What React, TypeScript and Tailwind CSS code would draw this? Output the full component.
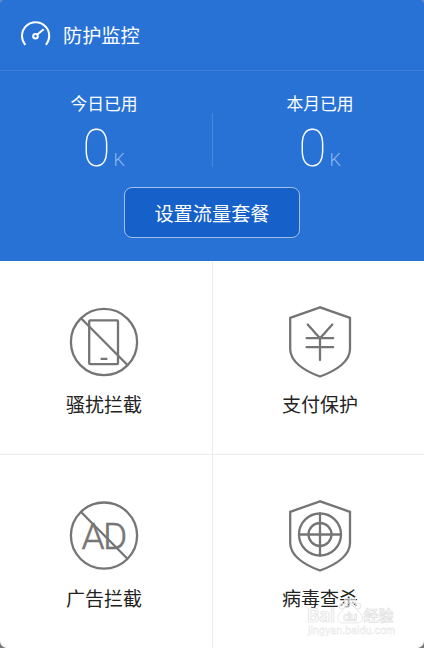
import type { ReactNode } from "react";

interface UsageProps {
  label: string;
  value: string;
  unit: string;
  className?: string;
}

interface TileProps {
  label: string;
  icon: ReactNode;
  className?: string;
}

function GaugeIcon() {
  return (
    <svg width="30" height="28" viewBox="0 0 30 28" fill="none" stroke="white" strokeWidth="2">
      <path d="M4.300 23.800A13.600 13.600 0 1 1 24.900 23.800" />
      <circle cx="14.500" cy="15.200" r="2.300" />
      <path d="M16.300 13.600L22.700 8.200" />
    </svg>
  );
}

function BlockedPhoneIcon() {
  return (
    <svg width="70" height="72" viewBox="0 0 70 72" fill="none" stroke="#757575" strokeWidth="2.3">
      <circle cx="35" cy="36" r="33.1" />
      <rect x="20.2" y="14.4" width="28.8" height="43.8" rx="1" />
      <path d="M12 12.2L58.2 58.800M31.600 52.800h6.800" />
    </svg>
  );
}

function BlockedAdIcon() {
  return (
    <svg width="70" height="72" viewBox="0 0 70 72" fill="none" stroke="#757575" strokeWidth="2.3">
      <circle cx="35" cy="35.6" r="33.1" />
      <path d="M12 12L58.200 58.500" />
      <text
        y="49"
        fill="#757575"
        strokeWidth="0.5"
        fontFamily="Roboto, sans-serif"
        fontWeight="300"
        fontSize="37"
      >
        <tspan x="12.5">A</tspan>
        <tspan x="34">D</tspan>
      </text>
    </svg>
  );
}

function Shield({ children }: { children: ReactNode }) {
  return (
    <svg width="70" height="72" viewBox="0 0 70 72" fill="none" stroke="#757575" strokeWidth="2.3" strokeLinecap="round">
      <path d="M35 1.300L5.200 11.800V43C5.200 55 18 64.500 35 70.500C52 64.500 65 55 65 43V11.800Z" />
      {children}
    </svg>
  );
}

function Usage({ label, value, unit, className = "" }: UsageProps) {
  return (
    <div className={`flex flex-col ${className}`}>
      <span className="text-[16.8px] leading-6">{label}</span>
      <div className="mt-1.5 flex h-12 items-baseline gap-[3px] pl-3">
        <span className="font-['Roboto'] text-[51px] leading-[55px] font-thin">{value}</span>
        <span className="font-['Roboto'] text-[18px] font-light text-[#93b9eb]">{unit}</span>
      </div>
    </div>
  );
}

function Tile({ label, icon, className = "" }: TileProps) {
  return (
    <div className={`flex flex-col items-center border-[#ebebeb] ${className}`}>
      {icon}
      <span className="mt-3 text-[19px] leading-7 text-[#222222]">{label}</span>
    </div>
  );
}

function Watermark() {
  return (
    <svg
      className="absolute top-[592px] left-[303px]"
      width="96"
      height="46"
      fill="white"
      fillOpacity="0.6"
      stroke="#dedede"
      strokeWidth="0.7"
      fontFamily="Inter, 'Noto Sans CJK SC', sans-serif"
      fontWeight="600"
    >
      <circle cx="39" cy="14" r="3" />
      <circle cx="44" cy="9" r="3" />
      <circle cx="50" cy="9" r="3" />
      <circle cx="55" cy="14" r="3" />
      <path d="M47 13C42 13 41 18 37 21C33 25 35 31 40 31H54C60 31 61 25 57 21C53 18 52 13 47 13Z" />
      <text x="4" y="30" fontSize="19" textLength="28" lengthAdjust="spacingAndGlyphs">Bai</text>
      <text x="40" y="29" fontSize="12" textLength="14">du</text>
      <text x="60.500" y="29" fontSize="15" textLength="30" fontWeight="500">经验</text>
      <text x="5" y="41.500" fontSize="10" strokeWidth="0.4" stroke="#e4e4e4" fontWeight="400" textLength="87" lengthAdjust="spacingAndGlyphs">jingyan.baidu.com</text>
    </svg>
  );
}

export default function App() {
  return (
    <div className="h-[648px] w-[424px] bg-[#777777] font-['Noto_Sans_CJK_SC',sans-serif]">
      <div className="relative flex h-full flex-col overflow-hidden rounded-t-[3px] rounded-b-[7px] bg-white">
        <section className="flex h-[261px] flex-col bg-[#2872d6] text-white">
          <header className="flex h-[71px] items-center gap-3 border-b border-[#3a7ddb] pl-[21px]">
            <GaugeIcon />
            <h1 className="text-[19.2px] leading-7">防护监控</h1>
          </header>
          <div className="flex h-[116px] pt-5">
            <Usage label="今日已用" value="0" unit="K" className="w-[212px] pl-[70.5px]" />
            <div className="mt-[22px] h-[54px] w-px bg-[#4a87dc]" />
            <Usage label="本月已用" value="0" unit="K" className="pl-[73.5px]" />
          </div>
          <button className="h-[51px] w-[176px] self-center rounded-lg border border-[#a1c0ec] bg-[#1560c9] pt-0.5 text-[19.2px]">
            设置流量套餐
          </button>
        </section>
        <main className="grid flex-1 grid-cols-[213px_211px] grid-rows-[194px_193px]">
          <Tile label="骚扰拦截" icon={<BlockedPhoneIcon />} className="border-r border-b pt-[45px] pr-1" />
          <Tile
            label="支付保护"
            icon={
              <Shield>
                <path d="M22.700 18.500L35 32.200L47.300 18.500M21.600 32.200H48.200M21.600 41.200H48.200M35 32.200V54" />
              </Shield>
            }
            className="border-b pt-[45px] pl-[3px]"
          />
          <Tile label="广告拦截" icon={<BlockedAdIcon />} className="border-r pt-[45px] pr-1" />
          <Tile
            label="病毒查杀"
            icon={
              <Shield>
                <circle cx="35" cy="34.5" r="21" />
                <circle cx="35" cy="34.5" r="11.5" />
                <path d="M14 34.500H56M35 13.500V55.500" />
              </Shield>
            }
            className="pt-[45px] pl-[3px]"
          />
        </main>
        <Watermark />
      </div>
    </div>
  );
}
